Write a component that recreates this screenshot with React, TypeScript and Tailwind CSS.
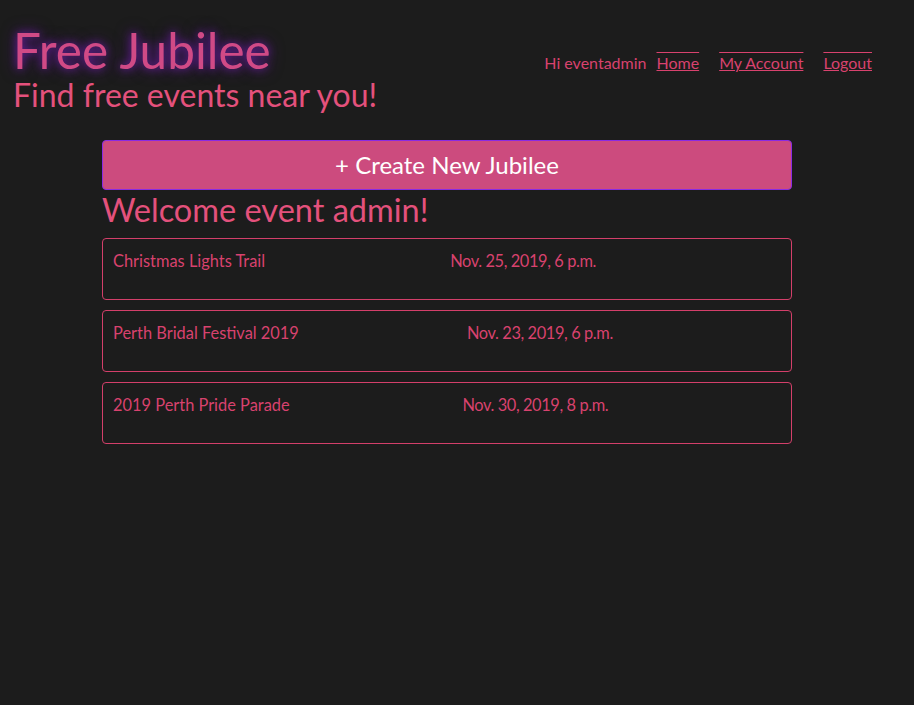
import React from "react";

const events = [
  { title: "Christmas Lights Trail", date: "Nov. 25, 2019, 6 p.m." },
  { title: "Perth Bridal Festival 2019", date: "Nov. 23, 2019, 6 p.m." },
  { title: "2019 Perth Pride Parade", date: "Nov. 30, 2019, 8 p.m." },
];

export default function App() {
  return (
    <div className="min-h-[705px] bg-[#1c1c1c] font-['Lato',sans-serif] text-[#d8426e]">
      <header className="flex items-start justify-between pl-[13px] pr-[42px] pt-[22px]">
        <div>
          <h1 className="text-[49.5px] leading-[56px] text-[#d04a86] [text-shadow:0_0_8px_#6a1fa0,0_0_16px_#4a1670]">
            Free Jubilee
          </h1>
          <p className="mt-[-2px] text-[32px] leading-[38px] text-[#e4517c]">Find free events near you!</p>
        </div>
        <nav className="mt-[31px] flex items-center text-[16px] leading-[20px]">
          <span className="mr-[10px]">Hi eventadmin</span>
          <a className="mr-[20px] [text-decoration-line:underline_overline]" href="#">Home</a>
          <a className="mr-[20px] [text-decoration-line:underline_overline]" href="#">My Account</a>
          <a className="[text-decoration-line:underline_overline]" href="#">Logout</a>
        </nav>
      </header>
      <main className="ml-[102px] mt-[26px] w-[690px]">
        <button className="flex h-[50px] w-full items-center justify-center rounded-[4px] border border-[#8a2be2] bg-[#cc4b7e] text-[24px] text-white">
          + Create New Jubilee
        </button>
        <h2 className="mt-[1px] text-[32.5px] leading-[38px] text-[#e4517c]">Welcome event admin!</h2>
        <div className="mt-[9px] flex flex-col gap-[10px]">
          {events.map((e) => (
            <div key={e.title} className="h-[62px] rounded-[4px] border border-[#d33f6a] px-[10px] pt-[12px]">
              <div className="flex justify-between text-[16.4px] leading-[20px]">
                <span>{e.title}</span>
                <span className="tracking-[-0.4px]">{e.date}</span>
                <span></span>
              </div>
            </div>
          ))}
        </div>
      </main>
    </div>
  );
}
